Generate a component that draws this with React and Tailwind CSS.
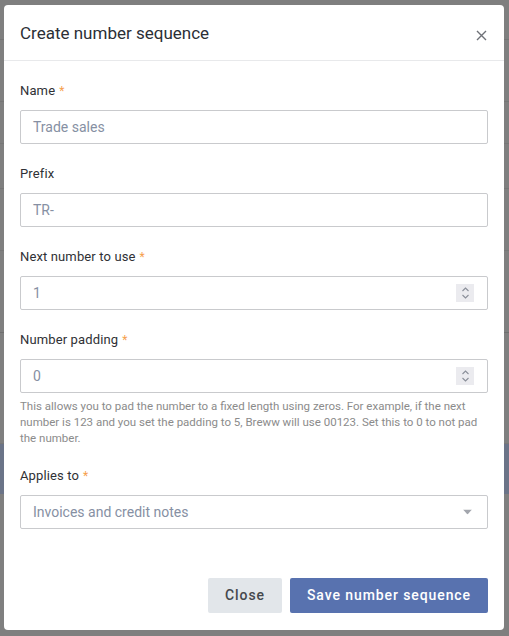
import { useState } from "react";

const font = { fontFamily: "Roboto, 'Liberation Sans', sans-serif" };

function Label({ children, required }) {
  return (
    <label className="block text-[13px] leading-4 font-normal tracking-[0.01em] text-[#2f3135] mb-[11px]">
      {children}
      {required && <span className="text-[#f6a04d] text-[12px] ml-1">*</span>}
    </label>
  );
}

function Stepper() {
  return (
    <div className="absolute right-[13px] top-1/2 -translate-y-1/2 w-[18px] h-[18px] bg-[#ebebef] flex flex-col items-center justify-center">
      <svg width="9" height="14" viewBox="0 0 9 14" fill="none" stroke="#8a8f99" strokeWidth="1.1">
        <path d="M1.5 5 L4.5 2 L7.5 5" />
        <path d="M1.5 9 L4.5 12 L7.5 9" />
      </svg>
    </div>
  );
}

function Field({ label, required, value, number, select, help }) {
  return (
    <div className="mb-[22px]">
      <Label required={required}>{label}</Label>
      <div className="relative h-[34px] border border-[#c9cacd] rounded-[2px] flex items-center pl-[12px] text-[14px] text-[#8690a3]">
        {value}
        {number && <Stepper />}
        {select && (
          <svg className="absolute right-[15px] top-1/2 -translate-y-1/2" width="9" height="5" viewBox="0 0 9 5">
            <path d="M0 0 H9 L4.5 5 Z" fill="#a3a6ad" />
          </svg>
        )}
      </div>
      {help && (
        <p className="mt-[5px] text-[11.5px] leading-4 text-[#8b8b8b]">{help}</p>
      )}
    </div>
  );
}

export default function App() {
  const [open] = useState(true);
  return (
    <div className="relative w-[509px] h-[636px] overflow-hidden bg-[#7f7f7f]" style={font}>
      {/* dimmed page behind the dialog */}
      <div className="flex flex-col">
        <div className="h-[40px] border-b border-[#757575]" />
        <div className="h-[62px] border-b border-[#767676]" />
        <div className="h-[42px] border-b border-[#777777]" />
        <div className="h-[45px] border-b border-[#767676]" />
        <div className="h-[62px] border-b border-[#777777]" />
        <div className="h-[82px] border-b border-[#6f6f6f]" />
        <div className="h-[111px] border-b border-[#787878]" />
        <div className="h-[50px] bg-[#6b7488]" />
      </div>

      {open && (
        <div className="absolute left-[4px] top-[5px] w-[500px] h-[625px] bg-white rounded-[4px] flex flex-col">
          <div className="h-[56px] flex items-center justify-between px-[16px] border-b border-[#e8e9eb]">
            <h2 className="text-[17px] text-[#2b2f36] pt-[3px]">Create number sequence</h2>
            <button className="w-[16px] h-[16px] flex items-center justify-center -mr-[1px] mt-[6px]">
              <svg width="11" height="11" viewBox="0 0 11 11" stroke="#6e7177" strokeWidth="1.4">
                <path d="M1 1 L10 10 M10 1 L1 10" />
              </svg>
            </button>
          </div>

          <div className="flex-1 flex flex-col px-[16px] pt-[22px] pb-[17px]">
            <Field label="Name" required value="Trade sales" />
            <Field label="Prefix" value="TR-" />
            <Field label="Next number to use" required value="1" number />
            <Field
              label="Number padding"
              required
              value="0"
              number
              help="This allows you to pad the number to a fixed length using zeros. For example, if the next number is 123 and you set the padding to 5, Breww will use 00123. Set this to 0 to not pad the number."
            />
            <Field label="Applies to" required value="Invoices and credit notes" select />

            <div className="mt-auto flex justify-end gap-[8px]">
              <button className="h-[35px] px-[17px] rounded-[2px] bg-[#e2e6ea] text-[14px] font-medium tracking-[0.065em] text-[#45484d]">
                Close
              </button>
              <button className="h-[35px] px-[17px] rounded-[2px] bg-[#5872af] text-[14px] font-medium tracking-[0.065em] text-white">
                Save number sequence
              </button>
            </div>
          </div>
        </div>
      )}
    </div>
  );
}
